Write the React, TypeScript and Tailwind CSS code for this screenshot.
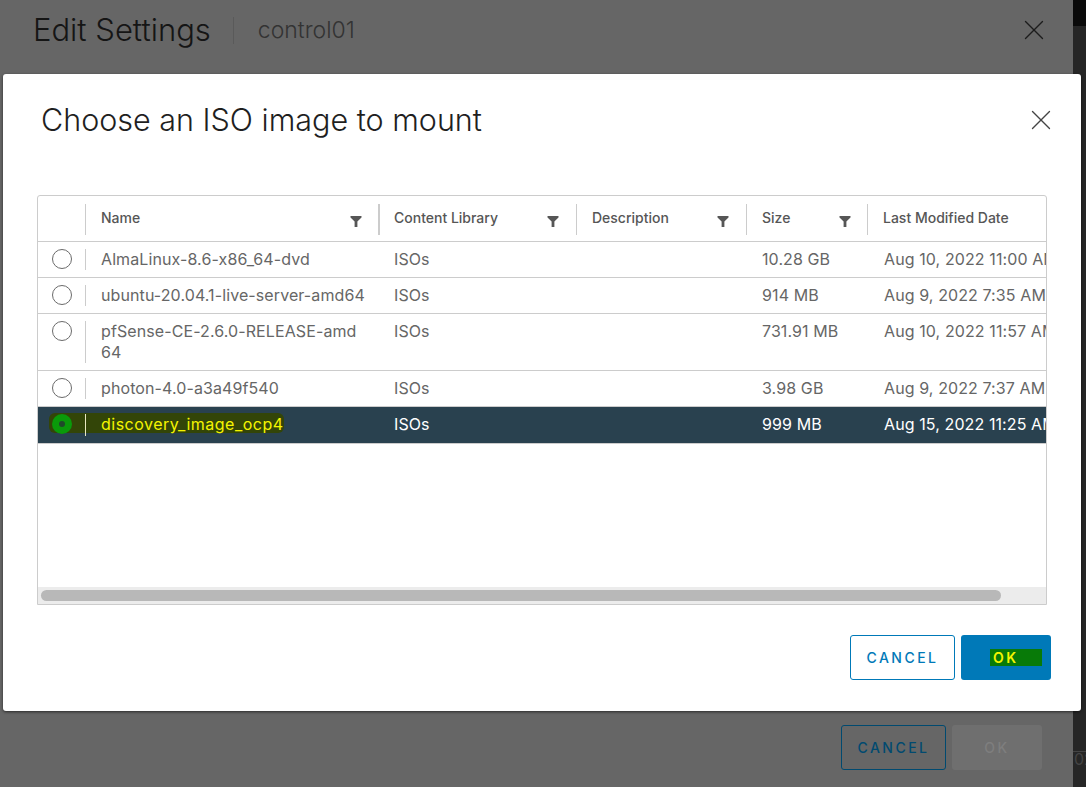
import { X } from 'lucide-react';

const font = "font-['Inter','Liberation_Sans',sans-serif]";

const columns = 'grid grid-cols-[47px_293px_198px_170px_121px_1fr]';

const rows = [
  { name: 'AlmaLinux-8.6-x86_64-dvd', size: '10.28 GB', date: 'Aug 10, 2022 11:00 AM', height: 'h-[36px]' },
  { name: 'ubuntu-20.04.1-live-server-amd64', size: '914 MB', date: 'Aug 9, 2022 7:35 AM', height: 'h-[36px]' },
  { name: 'pfSense-CE-2.6.0-RELEASE-amd 64', size: '731.91 MB', date: 'Aug 10, 2022 11:57 AM', height: 'h-[57px]' },
  { name: 'photon-4.0-a3a49f540', size: '3.98 GB', date: 'Aug 9, 2022 7:37 AM', height: 'h-[36px]' },
];

function FilterIcon() {
  return (
    <svg width="12" height="12" viewBox="0 0 12 12" className="shrink-0">
      <path d="M0.5 1h11v1.4L7.4 6.6V12H4.6V6.6L0.5 2.4z" fill="#565656" />
    </svg>
  );
}

function HeaderCell({
  label,
  filter = true,
  thick = false,
  pad = 'pr-[17px]',
}: {
  label: string;
  filter?: boolean;
  thick?: boolean;
  pad?: string;
}) {
  return (
    <div className={`relative flex items-start pl-[16px] pt-[13px] whitespace-nowrap ${pad}`}>
      <span className={`absolute left-0 top-[8px] h-[31px] bg-[#cccccc] ${thick ? 'w-[2px]' : 'w-px'}`} />
      <span className="flex-1 text-[14px] leading-[18px] font-medium text-[#565656]">{label}</span>
      {filter && (
        <span className="pt-[6px]">
          <FilterIcon />
        </span>
      )}
    </div>
  );
}

function Row({ name, size, date, height }: { name: string; size: string; date: string; height: string }) {
  return (
    <div className={`${columns} ${height} border-b border-[#cccccc] text-[16px] leading-[21px] tracking-[0.1px] text-[#666666]`}>
      <div className="pl-[14px] pt-[7px]">
        <span className="block h-[20px] w-[20px] rounded-full border border-[#6b6b6b] bg-white" />
      </div>
      <div className="relative py-[7px] pl-[16px] pr-[12px]">
        <span className="absolute bottom-[7px] left-0 top-[7px] w-px bg-[#cccccc]" />
        {name}
      </div>
      <div className="py-[7px] pl-[16px]">ISOs</div>
      <div />
      <div className="py-[7px] pl-[16px]">{size}</div>
      <div className="overflow-hidden whitespace-nowrap py-[7px] pl-[17px]">{date}</div>
    </div>
  );
}

function SelectedRow() {
  return (
    <div className={`${columns} relative h-[37px] border-b border-[#cccccc] bg-[#29414f] text-[16px] leading-[21px] tracking-[0.1px] text-white`}>
      {/* marker scribble over the name */}
      <span className="absolute left-[11px] top-[6px] h-[20px] w-[235px] rounded-[6px] bg-[#334508]" />
      <div className="relative pl-[14px] pt-[7px]">
        <span className="flex h-[20px] w-[20px] items-center justify-center rounded-full bg-[#0a9a0a]">
          <span className="h-[6px] w-[6px] rounded-full bg-[#1f4a2a]" />
        </span>
      </div>
      <div className="relative py-[7px] pl-[16px]">
        <span className="absolute bottom-[7px] left-0 top-[7px] w-px bg-[#e8e8c0]" />
        <span className="relative tracking-[0.5px] text-[#f5f500]">discovery_image_ocp4</span>
      </div>
      <div className="py-[7px] pl-[16px]">ISOs</div>
      <div />
      <div className="py-[7px] pl-[16px]">999 MB</div>
      <div className="overflow-hidden whitespace-nowrap py-[7px] pl-[17px]">Aug 15, 2022 11:25 AM</div>
    </div>
  );
}

export default function App() {
  return (
    <div className={`${font} relative flex h-[787px] w-[1086px] overflow-hidden bg-[#666666]`}>
      {/* page behind the dialog */}
      <div className="flex w-[1073px] shrink-0 flex-col justify-between">
        <div className="flex items-center pl-[33px] pr-[22px] pt-[13px]">
          <span className="text-[31px] leading-[34px] font-light text-[#151515]">Edit Settings</span>
          <span className="ml-[22px] h-[27px] w-px bg-[#5a5a5a]" />
          <span className="ml-[24px] text-[23px] leading-[34px] font-light text-[#333333]">control01</span>
          <X className="ml-auto text-[#1c1c1c]" size={34} strokeWidth={0.95} />
        </div>
        <div className="flex justify-end gap-[6px] pb-[17px] pr-[31px]">
          <span className="flex h-[45px] w-[105px] items-center justify-center rounded-[3px] border border-[#004a70] text-[14px] font-medium tracking-[2.5px] text-[#004a70]">
            CANCEL
          </span>
          <span className="flex h-[45px] w-[90px] items-center justify-center rounded-[3px] bg-[#6f6f6f] text-[14px] font-medium tracking-[2.5px] text-[#7e7e7e]">
            OK
          </span>
        </div>
      </div>

      {/* strip of the window behind */}
      <div className="flex min-w-0 flex-1 flex-col overflow-hidden bg-[#262626] text-[#444444]">
        <div className="h-[26px] bg-[#0a0a0a]" />
        <div className="mt-auto border-t border-[#444444] pb-[20px] pl-px text-[16px] leading-[15px]">02</div>
      </div>

      {/* ISO dialog */}
      <div className="absolute left-[3px] top-[74px] h-[637px] w-[1078px] rounded-[3px] bg-white shadow-[0_1px_3px_rgba(0,0,0,0.6)]">
        <div className="flex items-center justify-between pl-[38px] pr-[23px] pt-[28px]">
          <h1 className="text-[30.5px] leading-[36px] font-light text-[#1f1f1f]">Choose an ISO image to mount</h1>
          <X className="text-[#444444]" size={34} strokeWidth={0.95} />
        </div>

        <div className="ml-[34px] mt-[57px] flex h-[410px] w-[1010px] flex-col overflow-hidden rounded-t-[3px] border border-[#cccccc]">
          <div className={`${columns} h-[46px] shrink-0 border-b border-[#cccccc]`}>
            <div />
            <HeaderCell label="Name" pad="pr-[16px]" />
            <HeaderCell label="Content Library" thick />
            <HeaderCell label="Description" />
            <HeaderCell label="Size" pad="pr-[16px]" />
            <HeaderCell label="Last Modified Date" filter={false} />
          </div>
          <div className="flex-1">
            {rows.map((row) => (
              <Row key={row.name} {...row} />
            ))}
            <SelectedRow />
          </div>
          <div className="h-[17px] shrink-0 bg-[#ececec] px-[3px] py-[3px]">
            <div className="h-[11px] w-[960px] rounded-full bg-[#b8b8b8]" />
          </div>
        </div>

        <div className="mt-[30px] flex justify-end gap-[6px] pr-[30px]">
          <button className="h-[45px] w-[105px] rounded-[3px] border border-[#0079b8] text-[14px] font-medium tracking-[2.5px] text-[#0079b8]">
            CANCEL
          </button>
          <button className="flex h-[45px] w-[90px] items-center rounded-[3px] bg-[#0079b8] pl-[29px] text-[14px] font-semibold tracking-[2.5px] text-[#f5f500]">
            <span className="w-[52px] bg-[#087a08] pl-[3px] text-left leading-[17px]">OK</span>
          </button>
        </div>
      </div>
    </div>
  );
}
